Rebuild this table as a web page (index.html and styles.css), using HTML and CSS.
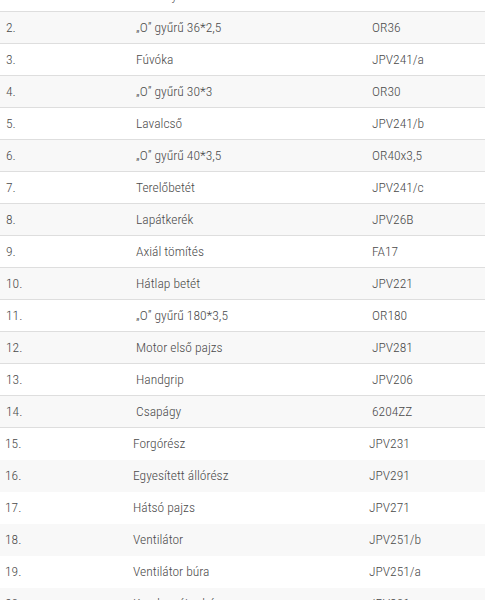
FILE: index.html
```html
<!DOCTYPE html>
<html lang="hu">
<head>
<meta charset="utf-8">
<link rel="stylesheet" href="styles.css">
</head>
<body>
<div class="parts">
  <div class="table table-a">
    <div class="row"><span>1.</span><span>Szivattyúház</span><span>JPV211</span></div>
    <div class="row"><span>2.</span><span>„O” gyűrű 36*2,5</span><span>OR36</span></div>
    <div class="row"><span>3.</span><span>Fúvóka</span><span>JPV241/a</span></div>
    <div class="row"><span>4.</span><span>„O” gyűrű 30*3</span><span>OR30</span></div>
    <div class="row"><span>5.</span><span>Lavalcső</span><span>JPV241/b</span></div>
    <div class="row"><span>6.</span><span>„O” gyűrű 40*3,5</span><span>OR40x3,5</span></div>
    <div class="row"><span>7.</span><span>Terelőbetét</span><span>JPV241/c</span></div>
    <div class="row"><span>8.</span><span>Lapátkerék</span><span>JPV26B</span></div>
    <div class="row"><span>9.</span><span>Axiál tömítés</span><span>FA17</span></div>
    <div class="row"><span>10.</span><span>Hátlap betét</span><span>JPV221</span></div>
    <div class="row"><span>11.</span><span>„O” gyűrű 180*3,5</span><span>OR180</span></div>
    <div class="row"><span>12.</span><span>Motor első pajzs</span><span>JPV281</span></div>
    <div class="row"><span>13.</span><span>Handgrip</span><span>JPV206</span></div>
    <div class="row"><span>14.</span><span>Csapágy</span><span>6204ZZ</span></div>
  </div>
  <div class="table table-b">
    <div class="row"><span>15.</span><span>Forgórész</span><span>JPV231</span></div>
    <div class="row"><span>16.</span><span>Egyesített állórész</span><span>JPV291</span></div>
    <div class="row"><span>17.</span><span>Hátsó pajzs</span><span>JPV271</span></div>
    <div class="row"><span>18.</span><span>Ventilátor</span><span>JPV251/b</span></div>
    <div class="row"><span>19.</span><span>Ventilátor búra</span><span>JPV251/a</span></div>
    <div class="row"><span>20.</span><span>Kondenzátor ház</span><span>JPV301</span></div>
  </div>
</div>
</body>
</html>
```
FILE: styles.css
```css
html, body {
  margin: 0;
  padding: 0;
  background: #fff;
  overflow: hidden;
}
.parts {
  margin-top: -21px;
  font-family: "Roboto Condensed", "Roboto", sans-serif;
  font-weight: 300;
  font-size: 13.5px;
  color: #4a4a4a;
}
.table {
  display: flex;
  flex-direction: column;
}
.row {
  display: grid;
  align-items: center;
  white-space: nowrap;
}
.row span {
  padding-bottom: 2px;
}
.table-a .row {
  grid-template-columns: 130px 236px 1fr;
  height: 31px;
  border-top: 1px solid #dedede;
}
.table-a .row:last-child {
  border-bottom: 1px solid #dedede;
}
.table-a .row span {
  padding-left: 6px;
}
.table-a .row:nth-child(even) {
  background: #f8f8f8;
}
.table-b .row {
  grid-template-columns: 128px 236px 1fr;
  height: 32px;
}
.table-b .row span {
  padding-left: 5px;
}
.table-b .row:nth-child(even) {
  background: #f8f8f8;
}
```
